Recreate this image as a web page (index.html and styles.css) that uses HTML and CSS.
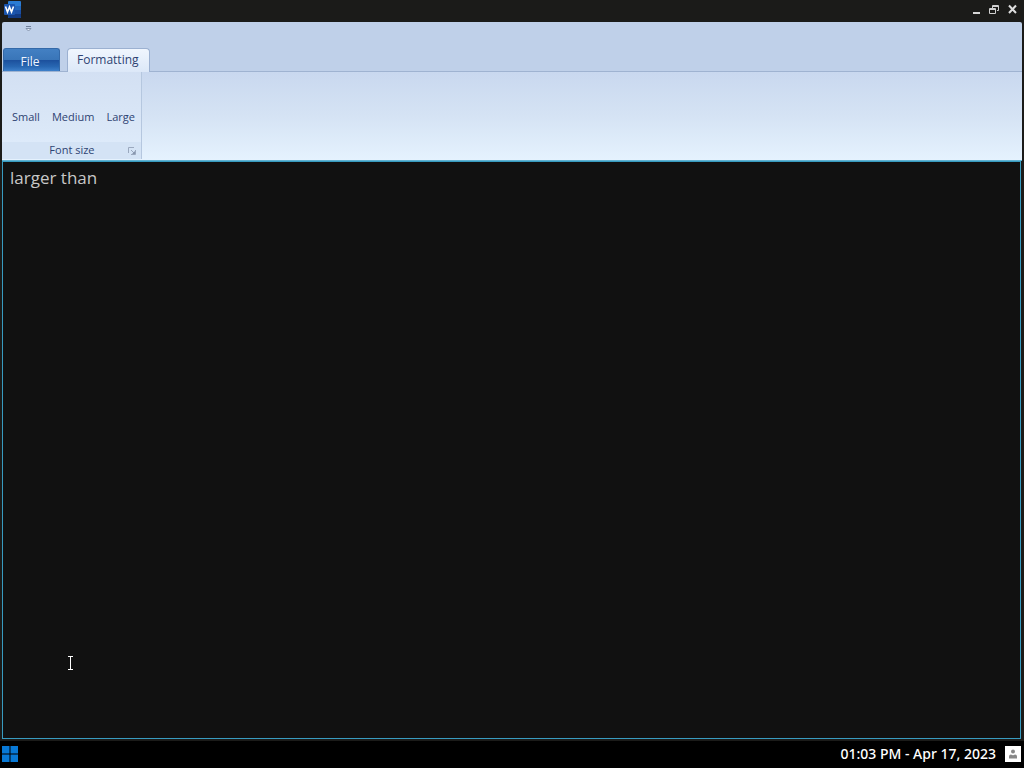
FILE: index.html
```html
<!DOCTYPE html>
<html lang="en">
<head>
<meta charset="utf-8">
<title>Word</title>
<link rel="stylesheet" href="styles.css">
</head>
<body>
<main class="window">
  <header class="titlebar">
    <svg class="app-icon" width="18" height="18" viewBox="0 0 18 18" aria-label="Word">
      <rect x="4" y="0" width="13" height="17" rx="1" fill="#2b7cd3"/>
      <path d="M4 5h13v4H4z" fill="#2368bd"/>
      <path d="M4 9h13v4H4z" fill="#1b50a5"/>
      <path d="M4 13h13v3q0 1-1 1H5q-1 0-1-1z" fill="#123b85"/>
      <rect x="0" y="3" width="11" height="11" rx="1" fill="#1b56b0"/>
      <path d="M1.500 5.500L3.500 11l2-5 2 5L9.500 5.500" fill="none" stroke="#fff" stroke-width="1.600"/>
    </svg>
    <div class="window-controls">
      <button aria-label="Minimize"><svg width="11" height="11" viewBox="0 0 11 11"><path d="M2 8h7v2H2z" fill="#d6d6d6"/></svg></button>
      <button aria-label="Restore"><svg width="11" height="11" viewBox="0 0 11 11" fill="none" stroke="#d0d0d0"><path d="M3.500 4V1.500h6v5H8M3.500 2.500h6M.5 4.500h6v5h-6zM.5 5.500h6"/></svg></button>
      <button aria-label="Close"><svg width="11" height="11" viewBox="0 0 11 11"><path d="M2 1.500l7 7.500M9 1.500L2 9" stroke="#dedede" stroke-width="2"/></svg></button>
    </div>
  </header>
  <section class="ribbon">
    <div class="quick-access">
      <button aria-label="Customize quick access"><svg width="7" height="6" viewBox="0 0 7 6"><path d="M1 .5h5" stroke="#71819c"/><path d="M1 2.500h5L3.500 5z" fill="#e8f0fb" stroke="#71819c" stroke-width=".8"/></svg></button>
    </div>
    <nav class="tabs">
      <button class="tab file-tab">File</button>
      <button class="tab active-tab">Formatting</button>
    </nav>
    <div class="panel">
      <section class="group">
        <div class="group-buttons">
          <button>Small</button>
          <button>Medium</button>
          <button>Large</button>
        </div>
        <div class="group-footer">
          <span class="group-title">Font size</span>
          <button class="launcher" aria-label="Font size options"><svg width="8" height="8" viewBox="0 0 8 8" fill="none" stroke="#9aa8be"><path d="M.5 6V.5H6M3 3l3.500 3.500M7.500 3v4.500H3"/><path d="M4 7l3-3v3z" fill="#8796ae" stroke="none"/></svg></button>
        </div>
      </section>
    </div>
  </section>
  <textarea class="editor" aria-label="Document" spellcheck="false">larger than</textarea>
  <svg class="text-cursor" width="7" height="15" viewBox="0 0 7 15" aria-hidden="true"><path d="M1 .5h5M1 13.500h5M3.500 1v12" stroke="#fff" fill="none"/></svg>
</main>
<footer class="taskbar">
  <button class="start" aria-label="Start"><svg width="16" height="16" viewBox="0 0 16 16" fill="#0879d6"><path d="M0 0h7.500v7.500H0zM8.500 0H16v7.500H8.500zM0 8.500h7.500V16H0zM8.500 8.500H16V16H8.500z"/></svg></button>
  <div class="tray">
    <time datetime="2023-04-17T13:03">01:03 PM - Apr 17, 2023</time>
    <button aria-label="User"><svg width="16" height="16" viewBox="0 0 16 16"><path d="M0 0h16v16H0z" fill="#fff"/><circle cx="8" cy="5.500" r="2" fill="#888"/><path d="M4 12.500V10.500q0-2 2-2 2 1.500 4 0 2 0 2 2v2z" fill="#888"/></svg></button>
  </div>
</footer>
</body>
</html>
```
FILE: styles.css
```css
* {
  box-sizing: border-box;
}

body {
  margin: 0;
  min-height: 100vh;
  display: flex;
  flex-direction: column;
  background: #000;
  font-family: "Open Sans", "Noto Sans", sans-serif;
}

button {
  margin: 0;
  padding: 0;
  border: 0;
  background: none;
  color: inherit;
  font: inherit;
}

svg {
  display: block;
}

.window {
  position: relative;
  flex: 1;
  display: flex;
  flex-direction: column;
  padding: 0 2px 2px;
  background: #1b1b19;
}

.titlebar {
  display: flex;
  justify-content: space-between;
  height: 22px;
  padding: 1px 4px 0 2px;
}

.window-controls {
  display: flex;
  align-items: center;
  gap: 7px;
  height: 17px;
}

.ribbon {
  background: #bfd0e9;
  color: #2e4372;
  font-size: 12px;
  line-height: 16px;
  border-radius: 2px 2px 0 0;
}

.quick-access {
  display: flex;
  align-items: flex-start;
  height: 26px;
  padding: 4px 23px;
}

.tabs {
  display: flex;
  align-items: flex-end;
  gap: 7px;
  height: 23px;
  padding-left: 1px;
}

.file-tab {
  width: 57px;
  height: 23px;
  padding: 3px 3px 0 0;
  border: 1px solid #3469a8;
  border-bottom: 0;
  border-radius: 3px 3px 0 0;
  background: linear-gradient(#4380c3, #3975b8 50%, #1c509d 51%, #2867b2 80%, #3e80ca);
  color: #eef5ff;
}

.active-tab {
  position: relative;
  height: 24px;
  margin-bottom: -1px;
  padding: 0 10px 2px 9px;
  border: 1px solid #9cb1d1;
  border-bottom: 0;
  border-radius: 4px 4px 0 0;
  background: linear-gradient(#f0f6fe, #dce8f8);
}

.panel {
  display: flex;
  height: 90px;
  padding-bottom: 1px;
  border-top: 1px solid #9fb3d1;
  border-bottom: 1px solid #62b4d2;
  background: linear-gradient(#c9d8ef, #d5e3f4 50%, #e5f2fe);
}

.group {
  display: flex;
  flex-direction: column;
  border-right: 1px solid #b5c7df;
  background: linear-gradient(#d3e0f3, #dae7f7 60%, #e0edfc);
}

.group-buttons {
  flex: 1;
  display: flex;
  align-items: flex-end;
  gap: 12px;
  padding: 0 6px 17px 10px;
  font-size: 11px;
}

.group-footer {
  display: flex;
  align-items: center;
  height: 17px;
  padding: 0 5px 1px 14px;
  background: #d4e3f5;
  font-size: 11px;
}

.group-title {
  flex: 1;
  text-align: center;
}

.launcher {
  padding-top: 2px;
}

.editor {
  flex: 1;
  display: block;
  margin-right: 1px;
  padding: 4px 7px;
  border: 1px solid #389bc0;
  outline: 0;
  resize: none;
  background: #111;
  color: #c8c8c8;
  font: 17px/24px "Open Sans", "Noto Sans", sans-serif;
}

.text-cursor {
  position: absolute;
  left: 67px;
  top: 656px;
}

.taskbar {
  display: flex;
  align-items: center;
  justify-content: space-between;
  height: 27px;
  padding: 0 3px 1px 2px;
  color: #fff;
}

.tray {
  display: flex;
  align-items: center;
  gap: 9px;
  font-family: "Noto Sans", "Open Sans", sans-serif;
  font-size: 14px;
  font-weight: 500;
  line-height: 20px;
}
```
